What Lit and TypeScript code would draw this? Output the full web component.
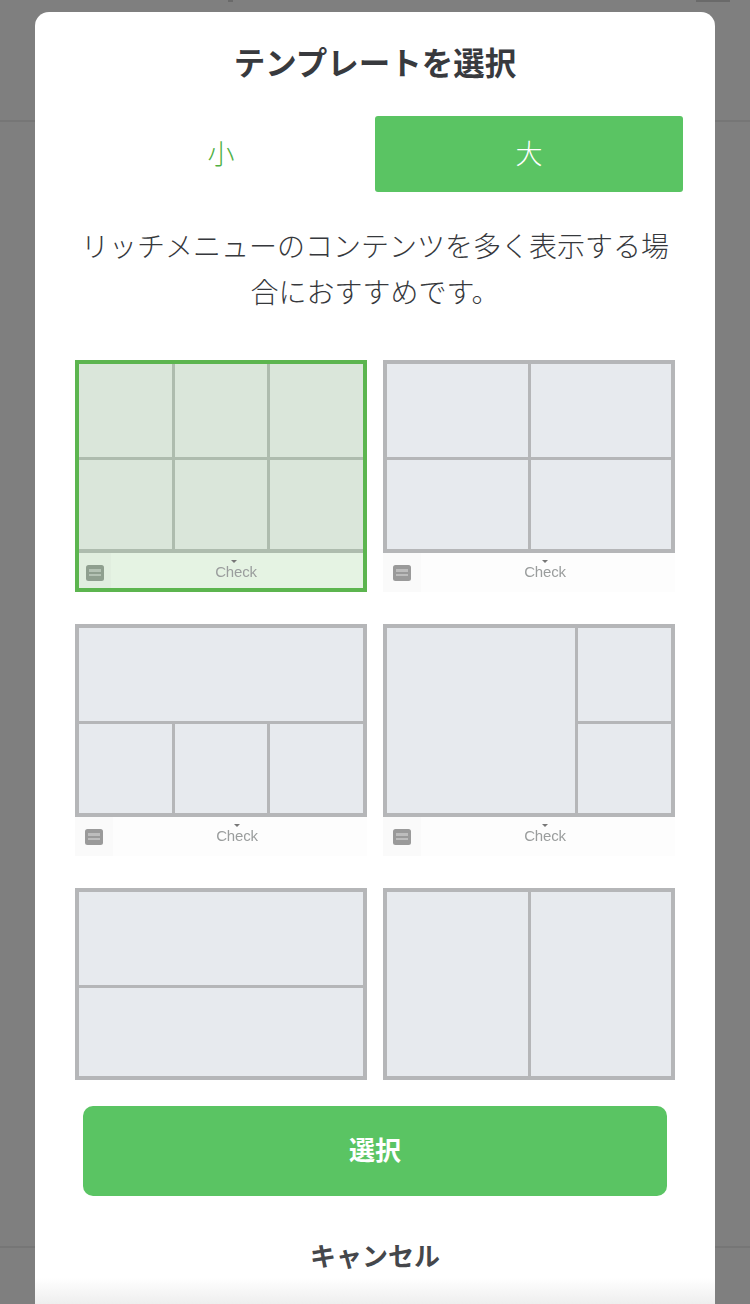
import { LitElement, html, css } from "lit";
import { customElement } from "lit/decorators.js";

type Tpl = { cols: string; rows: string; areas: string[]; selected?: boolean; footer: boolean };

const c3 = "1fr 1fr 1fr";
const r2 = "93px 1fr";
const templates: Tpl[] = [
  { cols: c3, rows: r2, areas: ["", "", "", "", "", ""], selected: true, footer: true },
  { cols: "1fr 1fr", rows: r2, areas: ["", "", "", ""], footer: true },
  { cols: c3, rows: r2, areas: ["1 / 1 / 2 / 4", "", "", ""], footer: true },
  { cols: c3, rows: r2, areas: ["1 / 1 / 3 / 3", "", ""], footer: true },
  { cols: "1fr", rows: r2, areas: ["", ""], footer: false },
  { cols: "1fr 1fr", rows: "1fr", areas: ["", ""], footer: false },
];

@customElement("app-root")
export class AppRoot extends LitElement {
  static styles = css`
    :host {
      display: block;
      position: relative;
      width: 750px;
      height: 1304px;
      overflow: hidden;
      background: #7f7f7f;
      font-family: "Noto Sans CJK JP", "Noto Sans", sans-serif;
    }
    .backdrop { height: 1304px; display: flex; flex-direction: column; }
    .band-top {
      height: 122px;
      flex: none;
      border-bottom: 2px solid #767676;
      box-sizing: border-box;
      display: flex;
      align-items: flex-start;
      padding-left: 228px;
    }
    .mark { height: 2px; background: #6a6a6a; }
    .mark.a { width: 5px; }
    .mark.b { width: 34px; margin-left: 463px; }
    .band-mid { height: 1126px; flex: none; border-bottom: 2px solid #767676; box-sizing: border-box; }
    .modal {
      position: absolute;
      left: 35px;
      top: 12px;
      width: 680px;
      height: 1292px;
      box-sizing: border-box;
      background: #fff;
      border-radius: 14px 14px 0 0;
      display: flex;
      flex-direction: column;
      overflow: hidden;
    }
    .title {
      margin: 26px 0 0;
      height: 46px;
      line-height: 46px;
      text-align: center;
      font-size: 31.5px;
      font-weight: 700;
      color: #383a3e;
    }
    .tabs {
      margin: 32px 32px 0;
      height: 76px;
      display: grid;
      grid-template-columns: 1fr 1fr;
    }
    .tab {
      display: flex;
      align-items: center;
      justify-content: center;
      font-size: 27px;
      font-weight: 300;
      color: #4fb044;
      border-radius: 3px;
      padding-bottom: 4px;
      box-sizing: border-box;
    }
    .tab.on { background: #5ac463; color: #fff; }
    .desc {
      margin: 30px 40px 0;
      text-align: center;
      font-size: 28px;
      line-height: 46px;
      font-weight: 300;
      color: #36383c;
    }
    .scroll {
      margin: 46px 40px 0;
      height: 720px;
      overflow: hidden;
      flex: none;
    }
    .grid {
      display: grid;
      grid-template-columns: 292px 292px;
      column-gap: 16px;
      row-gap: 32px;
    }
    .thumb { display: flex; flex-direction: column; height: 232px; }
    .thumb.short { height: 192px; }
    .thumb.sel { outline: 4px solid #5cb54f; outline-offset: -4px; }
    .cells {
      height: 193px;
      flex: none;
      box-sizing: border-box;
      display: grid;
      gap: 3px;
      border: 4px solid #b5b6b8;
      background: #b5b6b8;
    }
    .thumb.short .cells { height: 192px; }
    .thumb.sel .cells { background: #aebcae; border-color: #aebcae; }
    .cell { background: #e7eaee; }
    .thumb.sel .cell { background: #dae6da; }
    .foot {
      height: 39px;
      flex: none;
      display: flex;
      background: #fdfdfd;
    }
    .thumb.sel .foot { background: #e5f3e3; margin: 0 4px 4px; height: 35px; }
    .tabicon {
      width: 38px;
      flex: none;
      display: flex;
      align-items: center;
      justify-content: center;
      background: #fafafa;
    }
    .thumb.sel .tabicon { width: 32px; background: #e1eedf; padding-top: 4px; box-sizing: border-box; }
    .tabicon svg { display: block; filter: blur(0.5px); }
    .check {
      flex: 1;
      position: relative;
      display: flex;
      align-items: center;
      justify-content: center;
      font-family: "Liberation Sans", sans-serif;
      font-size: 15px;
      letter-spacing: -0.2px;
      color: #9a9d9d;
      filter: blur(0.5px);
      padding: 0 6px 2px 0;
      box-sizing: border-box;
    }
    .thumb.sel .check { padding: 2px 2px 0 0; }
    .check::before {
      content: "";
      position: absolute;
      left: 50%;
      top: 7px;
      margin-left: -6px;
      border: 3px solid transparent;
      border-top: 3px solid #777;
      border-bottom: 0;
    }
    .primary {
      margin: 26px 48px 0;
      height: 90px;
      flex: none;
      display: flex;
      align-items: center;
      justify-content: center;
      background: #5ac463;
      border-radius: 10px;
      color: #fff;
      font-size: 26px;
      font-weight: 700;
      padding-bottom: 6px;
      box-sizing: border-box;
    }
    .cancel {
      margin-top: 39px;
      height: 40px;
      line-height: 40px;
      flex: none;
      text-align: center;
      font-size: 26px;
      font-weight: 700;
      color: #45474b;
    }
    .fade {
      position: absolute;
      left: 0;
      right: 0;
      bottom: 0;
      height: 26px;
      background: linear-gradient(#ffffff, #eeeeee);
    }
  `;

  private thumb(t: Tpl) {
    const cls = `thumb ${t.selected ? "sel" : ""} ${t.footer ? "" : "short"}`;
    return html`<div class=${cls}>
      <div class="cells" style="grid-template-columns:${t.cols};grid-template-rows:${t.rows}">
        ${t.areas.map((a) => html`<div class="cell" style=${a ? `grid-area:${a}` : ""}></div>`)}
      </div>
      ${t.footer
        ? html`<div class="foot">
            <div class="tabicon">
              <svg width="18" height="16" viewBox="0 0 18 16">
                <rect width="18" height="16" rx="2.5" fill=${t.selected ? "#8f9f8f" : "#9a9a9a"} />
                <rect x="3" y="4" width="12" height="3" fill=${t.selected ? "#b4c2b4" : "#bdbdbd"} />
                <rect x="3" y="9" width="12" height="2" fill=${t.selected ? "#b4c2b4" : "#bdbdbd"} />
              </svg>
            </div>
            <div class="check">Check</div>
          </div>`
        : ""}
    </div>`;
  }

  render() {
    return html`
      <div class="backdrop">
        <div class="band-top"><span class="mark a"></span><span class="mark b"></span></div>
        <div class="band-mid"></div>
      </div>
      <div class="modal">
        <h1 class="title">テンプレートを選択</h1>
        <div class="tabs">
          <div class="tab">小</div>
          <div class="tab on">大</div>
        </div>
        <p class="desc">リッチメニューのコンテンツを多く表示する場合におすすめです。</p>
        <div class="scroll">
          <div class="grid">${templates.map((t) => this.thumb(t))}</div>
        </div>
        <div class="primary">選択</div>
        <div class="cancel">キャンセル</div>
        <div class="fade"></div>
      </div>
    `;
  }
}
